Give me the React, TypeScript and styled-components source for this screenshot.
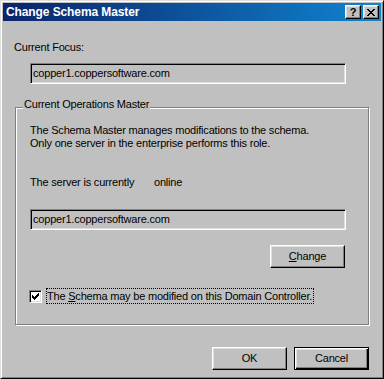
import React from "react";
import styled, { createGlobalStyle } from "styled-components";

const Global = createGlobalStyle`
  html, body { margin: 0; padding: 0; background: #c0c0c0; }
  body {
    font-family: "Liberation Sans", Arial, sans-serif;
    font-size: 11px;
    letter-spacing: -0.2px;
    color: #000;
  }
`;

const Window = styled.div`
  width: 384px;
  height: 379px;
  box-sizing: border-box;
  border: 1px solid;
  border-color: #dfdfdf #000 #000 #dfdfdf;
  box-shadow: inset 1px 1px #fff, inset -1px -1px #808080;
  padding: 2px;
  background: #c0c0c0;
  display: flex;
  flex-direction: column;
`;

const TitleBar = styled.div`
  flex: none;
  height: 18px;
  background: linear-gradient(to right, #0a246a, #1084d0);
  display: flex;
  align-items: center;
  padding: 0 2px 0 3px;
`;

const Title = styled.div`
  flex: 1;
  color: #fff;
  font-weight: bold;
  font-size: 12px;
  letter-spacing: -0.1px;
  line-height: 18px;
  white-space: nowrap;
`;

const TitleButton = styled.div`
  width: 16px;
  height: 14px;
  margin-left: 2px;
  box-sizing: border-box;
  background: #c0c0c0;
  border: 1px solid;
  border-color: #fff #000 #000 #fff;
  box-shadow: inset -1px -1px #808080, inset 1px 1px #dfdfdf;
  display: flex;
  align-items: center;
  justify-content: center;
  font-family: "Liberation Sans", Arial, sans-serif;
  font-weight: bold;
  font-size: 11px;
  letter-spacing: 0;
  line-height: 12px;
`;

const Body = styled.div`
  flex: 1;
  display: flex;
  flex-direction: column;
  align-items: flex-start;
  padding: 20px 12px 0 11px;
`;

const Label = styled.div`
  line-height: 13px;
  white-space: nowrap;
`;

const Field = styled.div<{ $indent: number; $top: number }>`
  margin: ${(p) => p.$top}px 0 0 ${(p) => p.$indent}px;
  width: 316px;
  height: 21px;
  box-sizing: border-box;
  border: 1px solid;
  border-color: #808080 #fff #fff #808080;
  box-shadow: inset 1px 1px #000, inset -1px -1px #dfdfdf;
  padding: 0 2px;
  line-height: 17px;
  display: flex;
  align-items: center;
  white-space: nowrap;
`;

const Group = styled.div`
  margin: 23px 0 0 1px;
  width: 354px;
  height: 218px;
  box-sizing: border-box;
  border: 1px solid #808080;
  box-shadow: inset 1px 1px #fff, 1px 1px #fff;
  display: flex;
  flex-direction: column;
  align-items: flex-start;
  padding-left: 14px;
`;

const Legend = styled.div`
  margin: -10px 0 0 -7px;
  padding: 0 1px;
  background: #c0c0c0;
  line-height: 13px;
  white-space: nowrap;
`;

const Description = styled.div`
  margin-top: 13px;
  line-height: 13px;
  white-space: nowrap;
`;

const StatusRow = styled.div`
  margin-top: 26px;
  display: flex;
  line-height: 13px;
  white-space: nowrap;
`;

const StatusLabel = styled.span`
  width: 124px;
`;

const Button = styled.div<{ $default?: boolean }>`
  width: 75px;
  height: 23px;
  box-sizing: border-box;
  background: #c0c0c0;
  border: 1px solid;
  border-color: ${(p) => (p.$default ? "#000" : "#fff #000 #000 #fff")};
  box-shadow: ${(p) =>
    p.$default
      ? "inset 1px 1px #fff, inset -1px -1px #000, inset -2px -2px #808080, inset 2px 2px #dfdfdf"
      : "inset -1px -1px #808080, inset 1px 1px #dfdfdf"};
  display: flex;
  align-items: center;
  justify-content: center;
  line-height: 13px;
`;

const ChangeButton = styled(Button)`
  align-self: flex-end;
  margin: 15px 23px 0 0;
`;

const CheckRow = styled.div`
  margin: 20px 0 0 -1px;
  display: flex;
  align-items: center;
  gap: 4px;
  height: 16px;
`;

const CheckBox = styled.div`
  width: 13px;
  height: 13px;
  box-sizing: border-box;
  background: #fff;
  border: 1px solid;
  border-color: #808080 #fff #fff #808080;
  box-shadow: inset 1px 1px #000, inset -1px -1px #dfdfdf;
  display: flex;
  align-items: center;
  justify-content: center;
`;

const CheckLabel = styled.div`
  height: 16px;
  box-sizing: border-box;
  border: 1px dotted #000;
  padding: 0 1px 0 0;
  line-height: 14px;
  white-space: nowrap;
`;

const ButtonRow = styled.div`
  align-self: stretch;
  margin-top: 22px;
  display: flex;
  justify-content: flex-end;
  gap: 7px;
`;

const checkPixels: [number, number][] = [
  [6, 0],
  [5, 1], [6, 1],
  [0, 2], [4, 2], [5, 2], [6, 2],
  [0, 3], [1, 3], [3, 3], [4, 3], [5, 3],
  [0, 4], [1, 4], [2, 4], [3, 4], [4, 4],
  [1, 5], [2, 5], [3, 5],
  [2, 6],
];

const closePixels: [number, number][] = [
  [0, 0], [1, 0], [6, 0], [7, 0],
  [1, 1], [2, 1], [5, 1], [6, 1],
  [2, 2], [3, 2], [4, 2], [5, 2],
  [3, 3], [4, 3],
  [2, 4], [3, 4], [4, 4], [5, 4],
  [1, 5], [2, 5], [5, 5], [6, 5],
  [0, 6], [1, 6], [6, 6], [7, 6],
];

const PixelIcon = ({ pixels, w, h }: { pixels: [number, number][]; w: number; h: number }) => (
  <svg width={w} height={h} viewBox={`0 0 ${w} ${h}`} shapeRendering="crispEdges">
    {pixels.map(([x, y]) => (
      <rect key={`${x}-${y}`} x={x} y={y} width={1} height={1} fill="#000" />
    ))}
  </svg>
);

export default function App() {
  return (
    <>
      <Global />
      <Window>
        <TitleBar>
          <Title>Change Schema Master</Title>
          <TitleButton>?</TitleButton>
          <TitleButton>
            <PixelIcon pixels={closePixels} w={8} h={7} />
          </TitleButton>
        </TitleBar>
        <Body>
          <Label>Current Focus:</Label>
          <Field $indent={16} $top={9}>copper1.coppersoftware.com</Field>
          <Group>
            <Legend>Current Operations Master</Legend>
            <Description>
              The Schema Master manages modifications to the schema.
              <br />
              Only one server in the enterprise performs this role.
            </Description>
            <StatusRow>
              <StatusLabel>The server is currently</StatusLabel>
              <span>online</span>
            </StatusRow>
            <Field $indent={0} $top={20}>copper1.coppersoftware.com</Field>
            <ChangeButton>
              <span>
                <u>C</u>hange
              </span>
            </ChangeButton>
            <CheckRow>
              <CheckBox>
                <PixelIcon pixels={checkPixels} w={7} h={7} />
              </CheckBox>
              <CheckLabel>
                The <u>S</u>chema may be modified on this Domain Controller.
              </CheckLabel>
            </CheckRow>
          </Group>
          <ButtonRow>
            <Button>OK</Button>
            <Button $default>Cancel</Button>
          </ButtonRow>
        </Body>
      </Window>
    </>
  );
}
